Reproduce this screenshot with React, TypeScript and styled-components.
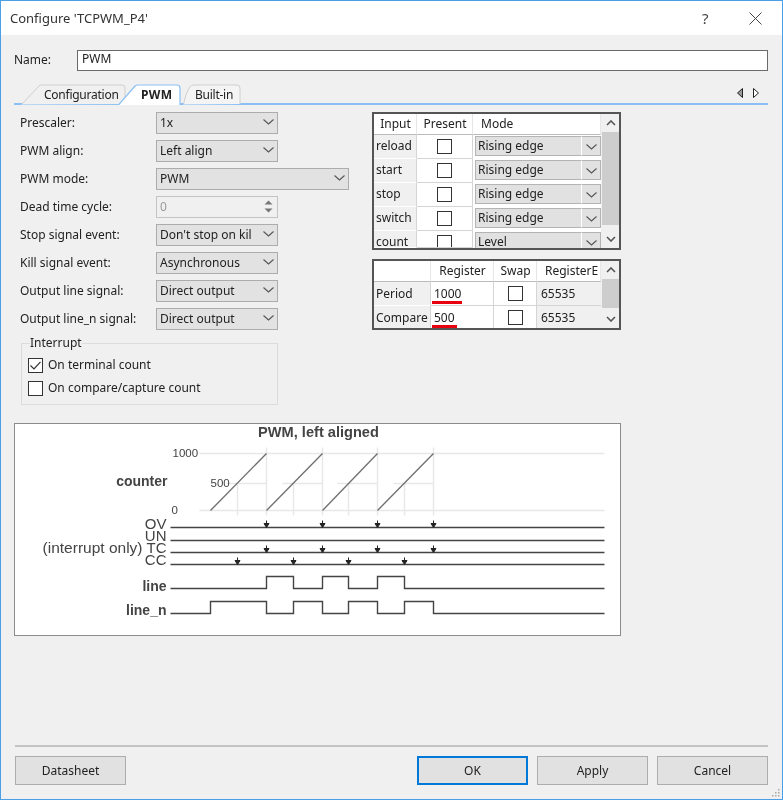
import React from 'react';
import styled, { createGlobalStyle } from 'styled-components';

const GlobalStyle = createGlobalStyle`
  html, body {
    margin: 0;
    padding: 0;
    background: #f0f0f0;
  }
  * {
    box-sizing: border-box;
  }
`;

const uiFont = `'Noto Sans', 'Noto Sans CJK JP', sans-serif`;
const textColor = '#222';

const Chevron = () => (
  <svg width="11" height="6" viewBox="0 0 11 6">
    <path d="M0.5 0.5 L5.5 5 L10.5 0.5" fill="none" stroke="#555" strokeWidth="1.1" />
  </svg>
);

const Window = styled.div`
  width: 783px;
  height: 800px;
  display: flex;
  flex-direction: column;
  position: relative;
  border: 1px solid #4a9fe6;
  background: #f0f0f0;
  font-family: ${uiFont};
  font-size: 12px;
  color: ${textColor};
  overflow: hidden;
  filter: blur(0.3px);
`;

const TitleBar = styled.div`
  height: 34px;
  flex: none;
  display: flex;
  align-items: center;
  padding: 0 20px 0 9px;
  background: #fff;
`;

const TitleText = styled.div`
  flex: 1;
  font-size: 13px;
  color: #333;
`;

const HelpMark = styled.div`
  width: 47px;
  font-size: 15px;
  color: #444;
`;

const Body = styled.div`
  flex: 1;
  display: flex;
  flex-direction: column;
  padding: 15px 14px 0 13px;
`;

const NameRow = styled.div`
  display: flex;
  align-items: center;
  height: 21px;
`;

const NameLabel = styled.div`
  width: 63px;
  margin-top: -2px;
`;

const NameInput = styled.div`
  flex: 1;
  height: 21px;
  padding: 0 4px;
  line-height: 16px;
  background: #fff;
  border: 1.5px solid #6a6a6a;
`;

const TabStrip = styled.div`
  position: relative;
  display: flex;
  align-items: flex-end;
  height: 21px;
  margin-top: 13px;
  padding-left: 7px;
  border-bottom: 2px solid #8cc0f5;
`;

const Tab = styled.div<{ $width: number; $left: number; $active?: boolean }>`
  position: relative;
  width: ${(props) => props.$width}px;
  height: 21px;
  margin-left: ${(props) => props.$left}px;
  margin-bottom: -2px;
  padding-left: 23px;
  line-height: 22px;
  letter-spacing: ${(props) => (props.$active ? '0.3px' : '-0.25px')};
  font-weight: ${(props) => (props.$active ? 700 : 400)};
  z-index: ${(props) => (props.$active ? 2 : 1)};
`;

const TabShape = styled.svg`
  position: absolute;
  inset: 0;
  z-index: -1;
`;

const BuiltInTab = styled(Tab)`
  padding-left: 12px;
`;

const TabNav = styled.div`
  position: absolute;
  right: 9px;
  top: 4px;
  display: flex;
  gap: 10px;
`;

const Content = styled.div`
  display: flex;
  margin-top: 7px;
`;

const FormColumn = styled.div`
  width: 358px;
  padding-left: 6px;
  display: flex;
  flex-direction: column;
  gap: 6px;
`;

const FieldRow = styled.div`
  display: flex;
  align-items: center;
  height: 22px;
`;

const FieldLabel = styled.div`
  width: 136px;
  margin-top: -1px;
`;

const SelectBox = styled.div<{ $wide?: boolean }>`
  width: ${(props) => (props.$wide ? 193 : 122)}px;
  height: 22px;
  display: flex;
  align-items: center;
  justify-content: space-between;
  padding: 0 3px 2px 3px;
  background: #e2e2e2;
  border: 1px solid #acacac;
  white-space: nowrap;
  overflow: hidden;
`;

const SpinBox = styled(SelectBox)`
  background: #f0f0f0;
  border-color: #c4c4c4;
  color: #999;
  padding-right: 1px;
`;

const SpinButtons = styled.div`
  width: 15px;
  display: flex;
  flex-direction: column;
  align-items: center;
  gap: 3px;
`;

const InterruptGroup = styled.fieldset`
  width: 257px;
  height: 70px;
  margin: -1px 0 0 1px;
  padding: 8px 0 0 6px;
  border: 1px solid #dcdcdc;
  display: flex;
  flex-direction: column;
  gap: 9px;
`;

const GroupLegend = styled.legend`
  margin-left: 2px;
  padding: 0;
  line-height: 16px;
`;

const CheckRow = styled.div`
  display: flex;
  align-items: center;
  gap: 5px;
  height: 15px;
  margin-top: -1px;
  line-height: 13px;
`;

const CheckLabel = styled.span`
  margin-top: -2px;
`;

const CheckBox = styled.div`
  width: 15px;
  height: 15px;
  flex: none;
  background: #fff;
  border: 1px solid #333;
  display: flex;
  align-items: center;
  justify-content: center;
`;

const GridColumn = styled.div`
  width: 249px;
  display: flex;
  flex-direction: column;
  gap: 9px;
`;

const TableFrame = styled.div<{ $height: number }>`
  height: ${(props) => props.$height}px;
  display: flex;
  background: #fff;
  border: 2px solid #555;
  overflow: hidden;
`;

const DataGrid = styled.div<{ $columns: string; $rows: string }>`
  flex: 1;
  display: grid;
  grid-template-columns: ${(props) => props.$columns};
  grid-template-rows: ${(props) => props.$rows};
  overflow: hidden;
`;

const HeaderCell = styled.div`
  display: flex;
  align-items: center;
  justify-content: center;
  padding: 0 0 2px 1px;
  background: #fff;
  border-right: 1px solid #e6e6e6;
  border-bottom: 1px solid #bbb;
  white-space: nowrap;
  overflow: hidden;
`;

const LeftHeaderCell = styled(HeaderCell)`
  justify-content: flex-start;
  padding-left: 8px;
`;

const RowHeader = styled.div`
  padding: 5px 0 0 2px;
  line-height: 11px;
  background: #f0f0f0;
  border-right: 1px solid #d4d4d4;
  border-bottom: 1px solid #fff;
  white-space: nowrap;
`;

const CenterCell = styled.div`
  display: flex;
  justify-content: center;
  padding-top: 4px;
  background: #fff;
  border-right: 1px solid #d4d4d4;
  border-bottom: 1px solid #d4d4d4;
  overflow: hidden;
`;

const ComboCell = styled.div<{ $clipped?: boolean }>`
  display: flex;
  padding: 1px 0 ${(props) => (props.$clipped ? 0 : 2)}px 2px;
  background: #fff;
  border-bottom: ${(props) => (props.$clipped ? 'none' : '1px solid #fff')};
`;

const ComboText = styled.div<{ $clipped?: boolean }>`
  flex: 1;
  padding: 3px 0 0 2px;
  line-height: 11px;
  background: #e1e1e1;
  border: 1px solid #b4b4b4;
  border-right: 1px solid #fff;
  border-bottom: ${(props) => (props.$clipped ? 'none' : '1px solid #b4b4b4')};
`;

const ComboArrow = styled.div<{ $clipped?: boolean }>`
  width: 19px;
  display: flex;
  justify-content: center;
  padding-top: 7px;
  background: #e1e1e1;
  border: 1px solid #b4b4b4;
  border-left: none;
  border-bottom: ${(props) => (props.$clipped ? 'none' : '1px solid #b4b4b4')};
`;

const RegisterCell = styled.div`
  position: relative;
  display: flex;
  align-items: center;
  padding-left: 3px;
  background: #fff;
  border-right: 1px solid #d4d4d4;
  border-bottom: 1px solid #d4d4d4;
`;

const ValueCell = styled.div`
  display: flex;
  align-items: center;
  padding-left: 4px;
  background: #f0f0f0;
  border-bottom: 1px solid #d4d4d4;
`;

const RegisterName = styled(RowHeader)`
  padding-top: 6px;
`;

const RedMark = styled.div<{ $width: number }>`
  position: absolute;
  left: 1px;
  bottom: 1.5px;
  width: ${(props) => props.$width}px;
  height: 2.5px;
  background: #e8000f;
`;

const ScrollBar = styled.div`
  width: 18px;
  flex: none;
  display: flex;
  flex-direction: column;
  padding-left: 1px;
  background: #f0f0f0;
`;

const ScrollArrow = styled.div`
  height: 18px;
  flex: none;
  display: flex;
  align-items: center;
  justify-content: center;
`;

const ScrollThumb = styled.div<{ $height: number }>`
  height: ${(props) => props.$height}px;
  flex: none;
  background: #cdcdcd;
`;

const ScrollFill = styled.div`
  flex: 1;
`;

const DiagramBox = styled.div`
  width: 607px;
  height: 213px;
  margin-top: 18px;
  background: #fff;
  border: 1.5px solid #8c8c8c;
  font-family: 'Liberation Sans', Arial, sans-serif;
  overflow: hidden;
`;

const Diagram = styled.svg`
  display: block;
`;

const Footer = styled.div`
  margin-top: auto;
  padding-bottom: 14px;
`;

const Separator = styled.div`
  height: 2px;
  margin-left: 1px;
  background: #c4c4c4;
`;

const ButtonRow = styled.div`
  display: flex;
  gap: 9px;
  margin-top: 9px;
  padding-left: 1px;
`;

const DialogButton = styled.div<{ $primary?: boolean }>`
  width: 111px;
  height: 29px;
  display: flex;
  align-items: center;
  justify-content: center;
  background: #e1e1e1;
  border: ${(props) => (props.$primary ? '2px solid #0078d7' : '1px solid #adadad')};
`;

const ButtonSpacer = styled.div`
  flex: 1;
`;

const ResizeGrip = styled.svg`
  position: absolute;
  right: 1px;
  bottom: 1px;
`;

const ScrollChevron = ({ up }: { up?: boolean }) => (
  <svg width="10" height="6" viewBox="0 0 10 6">
    <path
      d={up ? 'M1 5 L5 1 L9 5' : 'M1 1 L5 5 L9 1'}
      fill="none"
      stroke="#555"
      strokeWidth="1.6"
    />
  </svg>
);

const Scroll = ({ thumb }: { thumb: number }) => (
  <ScrollBar>
    <ScrollArrow>
      <ScrollChevron up />
    </ScrollArrow>
    <ScrollThumb $height={thumb} />
    <ScrollFill />
    <ScrollArrow>
      <ScrollChevron />
    </ScrollArrow>
  </ScrollBar>
);

const fields = [
  { label: 'Prescaler:', value: '1x' },
  { label: 'PWM align:', value: 'Left align' },
  { label: 'PWM mode:', value: 'PWM', wide: true },
  { label: 'Dead time cycle:', value: '0', spin: true },
  { label: 'Stop signal event:', value: "Don't stop on kil" },
  { label: 'Kill signal event:', value: 'Asynchronous' },
  { label: 'Output line signal:', value: 'Direct output' },
  { label: 'Output line_n signal:', value: 'Direct output' },
];

const inputs = [
  { name: 'reload', mode: 'Rising edge' },
  { name: 'start', mode: 'Rising edge' },
  { name: 'stop', mode: 'Rising edge' },
  { name: 'switch', mode: 'Rising edge' },
  { name: 'count', mode: 'Level', clipped: true },
];

const registers = [
  { name: 'Period', value: '1000', mark: 30, buffer: '65535' },
  { name: 'Compare', value: '500', mark: 25, buffer: '65535' },
];

const periods = [267, 323, 378, 434];
const compares = [238, 294, 349, 405];
const rampStarts = [211, 267, 323, 378];
const halfGrid = [
  [227, 267],
  [283, 323],
  [338, 378],
  [394, 434],
];

// label baselines are packed tighter than the lines, so they overlap in the picture too
const eventLines = [
  { y: 528, label: 'OV', labelY: 529, marks: periods },
  { y: 541, label: 'UN', labelY: 541, marks: [] as number[] },
  { y: 553, label: 'TC', labelY: 553, marks: periods },
  { y: 565, label: 'CC', labelY: 565, marks: compares },
];

const waveLine =
  'M171 589 H267 V577 H294 V589 H323 V577 H349 V589 H378 V577 H405 V589 H605';
const waveLineN =
  'M171 614 H211 V602 H267 V614 H294 V602 H323 V614 H349 V602 H378 V614 H405 V602 H434 V614 H605';

const PwmDiagram = () => (
  <Diagram width="604" height="210" viewBox="15.5 424.5 604 210">
    <text x="319" y="437" fontSize="14.6" fontWeight="700" textAnchor="middle" fill="#444">
      PWM, left aligned
    </text>

    <g stroke="#e8e8e8" strokeWidth="1.5" fill="none">
      <path d="M200 454 H605 M200 511 H605" />
      {halfGrid.map(([from, to]) => (
        <path key={from} d={`M${from} 484 H${to}`} />
      ))}
      {periods.map((x) => (
        <path key={x} d={`M${x} 448 V516`} />
      ))}
      {compares.map((x) => (
        <path key={x} d={`M${x} 484 V516`} />
      ))}
    </g>
    <g stroke="#6e6e6e" strokeWidth="1.3" fill="none">
      {rampStarts.map((x, i) => (
        <path key={x} d={`M${x} 511 L${periods[i]} 454`} />
      ))}
    </g>

    <g fontSize="11.5" fill="#444">
      <text x="173" y="457">1000</text>
      <text x="211" y="487">500</text>
      <text x="172" y="514">0</text>
    </g>
    <text x="168" y="486" fontSize="14" fontWeight="700" textAnchor="end" fill="#444">
      counter
    </text>

    {eventLines.map((line) => (
      <g key={line.label}>
        <path d={`M171 ${line.y} H605`} stroke="#444" strokeWidth="1.4" fill="none" />
        <text x="167" y={line.labelY} fontSize="15" textAnchor="end" fill="#444">
          {line.label}
        </text>
        {line.marks.map((x) => (
          <path
            key={x}
            d={`M${x} ${line.y - 7} V${line.y - 1} M${x - 2.5} ${line.y - 4} H${x + 2.5} L${x} ${line.y} Z`}
            stroke="#222"
            strokeWidth="1"
            fill="#222"
          />
        ))}
      </g>
    ))}
    <text x="143" y="553" fontSize="15.5" textAnchor="end" fill="#444">
      (interrupt only)
    </text>

    <path d={waveLine} stroke="#444" strokeWidth="1.4" fill="none" />
    <path d={waveLineN} stroke="#444" strokeWidth="1.4" fill="none" />
    <text x="167" y="591" fontSize="14" fontWeight="700" textAnchor="end" fill="#444">
      line
    </text>
    <text x="167" y="615" fontSize="14" fontWeight="700" textAnchor="end" fill="#444">
      line_n
    </text>
  </Diagram>
);

export default function App() {
  return (
    <>
      <GlobalStyle />
      <Window>
        <TitleBar>
          <TitleText>Configure 'TCPWM_P4'</TitleText>
          <HelpMark>?</HelpMark>
          <svg width="13" height="13" viewBox="0 0 13 13">
            <path d="M0.5 0.5 L12.5 12.5 M12.5 0.5 L0.5 12.5" stroke="#444" strokeWidth="1" />
          </svg>
        </TitleBar>

        <Body>
          <NameRow>
            <NameLabel>Name:</NameLabel>
            <NameInput>PWM</NameInput>
          </NameRow>

          <TabStrip>
            <Tab $width={106} $left={0}>
              <TabShape width="106" height="21" viewBox="0 0 106 21">
                <path d="M0.5 20.5 L18 2 Q19 1 21 1 H101 Q104 1 104 4 V20" fill="#f0f0f0" stroke="#cfcfcf" />
              </TabShape>
              Configuration
            </Tab>
            <Tab $width={63} $left={-9} $active>
              <TabShape width="63" height="21" viewBox="0 0 63 21">
                <path d="M0.5 21 L17 2 Q18 1 20 1 H59 Q62 1 62 4 V21" fill="#fff" stroke="#8cc0f5" strokeWidth="1.2" />
              </TabShape>
              PWM
            </Tab>
            <BuiltInTab $width={58} $left={2}>
              <TabShape width="58" height="21" viewBox="0 0 58 21">
                <path d="M0.5 20.5 Q3 8 7 3 Q8 1 11 1 H54 Q57 1 57 4 V20" fill="#f4f4f4" stroke="#cfcfcf" />
              </TabShape>
              Built-in
            </BuiltInTab>
            <TabNav>
              <svg width="6" height="10" viewBox="0 0 6 10">
                <path d="M5.5 0.5 V9.5 L0.5 5 Z" fill="#999" stroke="#222" />
              </svg>
              <svg width="6" height="10" viewBox="0 0 6 10">
                <path d="M0.5 0.5 V9.5 L5.5 5 Z" fill="#fff" stroke="#222" />
              </svg>
            </TabNav>
          </TabStrip>

          <Content>
            <FormColumn>
              {fields.map((field) => (
                <FieldRow key={field.label}>
                  <FieldLabel>{field.label}</FieldLabel>
                  {field.spin ? (
                    <SpinBox>
                      {field.value}
                      <SpinButtons>
                        <svg width="9" height="5" viewBox="0 0 9 5">
                          <path d="M0.5 4.5 L4.5 0.5 L8.5 4.5 Z" fill="#777" />
                        </svg>
                        <svg width="9" height="5" viewBox="0 0 9 5">
                          <path d="M0.5 0.5 L4.5 4.5 L8.5 0.5 Z" fill="#777" />
                        </svg>
                      </SpinButtons>
                    </SpinBox>
                  ) : (
                    <SelectBox $wide={field.wide}>
                      {field.value}
                      <Chevron />
                    </SelectBox>
                  )}
                </FieldRow>
              ))}
              <InterruptGroup>
                <GroupLegend>Interrupt</GroupLegend>
                <CheckRow>
                  <CheckBox>
                    <svg width="11" height="9" viewBox="0 0 11 9">
                      <path d="M0.5 4.5 L4 8 L10.5 0.8" fill="none" stroke="#333" strokeWidth="1.2" />
                    </svg>
                  </CheckBox>
                  <CheckLabel>On terminal count</CheckLabel>
                </CheckRow>
                <CheckRow>
                  <CheckBox />
                  <CheckLabel>On compare/capture count</CheckLabel>
                </CheckRow>
              </InterruptGroup>
            </FormColumn>

            <GridColumn>
              <TableFrame $height={138}>
                <DataGrid $columns="43px 56px 1fr" $rows="21px repeat(4, 24px) 17px">
                  <HeaderCell>Input</HeaderCell>
                  <HeaderCell>Present</HeaderCell>
                  <LeftHeaderCell>Mode</LeftHeaderCell>
                  {inputs.map((row) => (
                    <React.Fragment key={row.name}>
                      <RowHeader>{row.name}</RowHeader>
                      <CenterCell>
                        <CheckBox />
                      </CenterCell>
                      <ComboCell $clipped={row.clipped}>
                        <ComboText $clipped={row.clipped}>{row.mode}</ComboText>
                        <ComboArrow $clipped={row.clipped}>
                          <Chevron />
                        </ComboArrow>
                      </ComboCell>
                    </React.Fragment>
                  ))}
                </DataGrid>
                <Scroll thumb={93} />
              </TableFrame>

              <TableFrame $height={71}>
                <DataGrid $columns="57px 63px 43px 1fr" $rows="21px 24px 24px">
                  <HeaderCell />
                  <HeaderCell>Register</HeaderCell>
                  <HeaderCell>Swap</HeaderCell>
                  <LeftHeaderCell>RegisterE</LeftHeaderCell>
                  {registers.map((row) => (
                    <React.Fragment key={row.name}>
                      <RegisterName>{row.name}</RegisterName>
                      <RegisterCell>
                        {row.value}
                        <RedMark $width={row.mark} />
                      </RegisterCell>
                      <CenterCell>
                        <CheckBox />
                      </CenterCell>
                      <ValueCell>{row.buffer}</ValueCell>
                    </React.Fragment>
                  ))}
                </DataGrid>
                <Scroll thumb={29} />
              </TableFrame>
            </GridColumn>
          </Content>

          <DiagramBox>
            <PwmDiagram />
          </DiagramBox>

          <Footer>
            <Separator />
            <ButtonRow>
              <DialogButton>Datasheet</DialogButton>
              <ButtonSpacer />
              <DialogButton $primary>OK</DialogButton>
              <DialogButton>Apply</DialogButton>
              <DialogButton>Cancel</DialogButton>
            </ButtonRow>
          </Footer>
        </Body>

        <ResizeGrip width="10" height="10" viewBox="0 0 10 10">
          <g fill="#aaa">
            <rect x="7" y="1" width="1.5" height="1.5" />
            <rect x="7" y="4" width="1.5" height="1.5" />
            <rect x="4" y="4" width="1.5" height="1.5" />
            <rect x="7" y="7" width="1.5" height="1.5" />
            <rect x="4" y="7" width="1.5" height="1.5" />
            <rect x="1" y="7" width="1.5" height="1.5" />
          </g>
        </ResizeGrip>
      </Window>
    </>
  );
}
